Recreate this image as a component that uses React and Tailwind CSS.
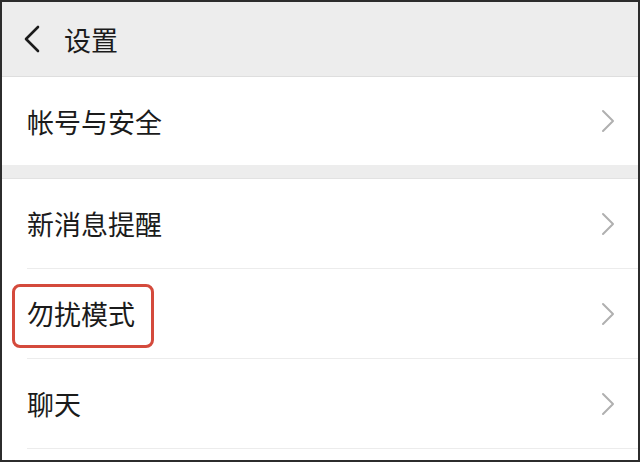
import React from "react";

const font = { fontFamily: '"Noto Sans CJK SC", "Noto Sans", sans-serif' };

function Chevron() {
  return (
    <svg width="14" height="24" viewBox="0 0 14 24" className="shrink-0">
      <polyline points="2,2 12,12 2,22" fill="none" stroke="#b0b0b0" strokeWidth="2" strokeLinecap="round" strokeLinejoin="round" />
    </svg>
  );
}

function Row({ label, highlight }) {
  return (
    <div className="relative pl-[25px] bg-white">
      <div className="flex items-center justify-between h-[90px] pr-[23px] border-b border-[#ececec]">
        <span className="text-[27px] leading-none text-[#1b1b1b]">{label}</span>
        <Chevron />
      </div>
      {highlight && (
        <div className="absolute left-[10px] top-[15px] w-[142px] h-[64px] border-[3px] border-[#d44a3c] rounded-[8px] pointer-events-none" />
      )}
    </div>
  );
}

export default function App() {
  return (
    <div className="w-[640px] h-[462px] border-2 border-[#2c2c2c] bg-white overflow-hidden flex flex-col" style={font}>
      <div className="h-[75px] shrink-0 bg-[#ededed] border-b border-[#dedede] flex items-center pl-[21px]">
        <svg width="18" height="28" viewBox="0 0 18 28" className="shrink-0">
          <polyline points="15,2 3,14 15,26" fill="none" stroke="#1b1b1b" strokeWidth="2.6" strokeLinecap="round" strokeLinejoin="round" />
        </svg>
        <span className="ml-[23px] text-[27px] leading-none text-[#1b1b1b]">设置</span>
      </div>
      <div className="relative pl-[25px] bg-white">
        <div className="flex items-center justify-between h-[88px] pr-[23px]">
          <span className="text-[27px] leading-none text-[#1b1b1b]">帐号与安全</span>
          <Chevron />
        </div>
      </div>
      <div className="h-[14px] shrink-0 bg-[#ededed] border-b border-[#e2e2e2]" />
      <Row label="新消息提醒" />
      <Row label="勿扰模式" highlight />
      <Row label="聊天" />
      <div className="flex-1 bg-white" />
    </div>
  );
}
